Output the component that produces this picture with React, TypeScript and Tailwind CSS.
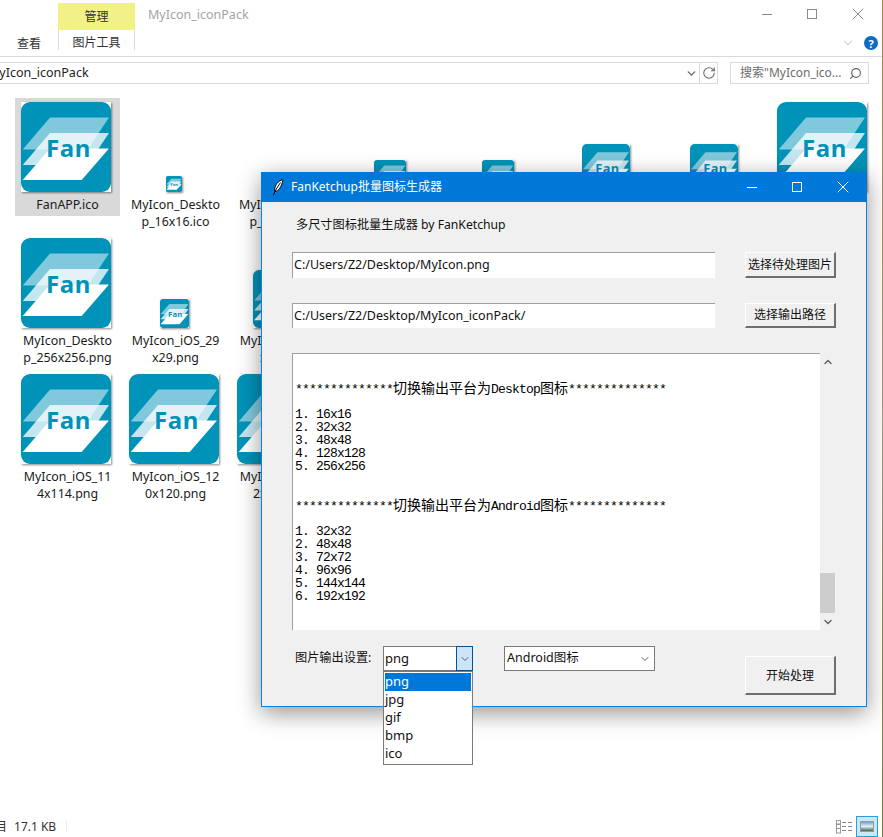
import React from "react";
import { RotateCw, Search, ChevronDown, ChevronUp, X } from "lucide-react";

const ui = "font-['Noto_Sans','Noto_Sans_CJK_SC',sans-serif]";

function Logo({ size }: { size: number }) {
  return (
    <svg width={size} height={size} viewBox="0 0 90 90" className="block shrink-0 bg-white shadow-[1px_1px_2px_rgba(0,0,0,0.45)]">
      <rect x="0" y="0" width="90" height="90" rx="9" fill="#0093b9" />
      <polygon points="29,15.5 88,15.5 66.7,47.5 1.7,47.5" fill="#80c8dc" />
      <polygon points="29,31 88,31 66.7,63 1.7,63" fill="#ffffff" fillOpacity="0.77" />
      <polygon points="29,46.5 88,46.5 60.7,78 1.7,78" fill="#ffffff" />
      <text x="47.5" y="55" textAnchor="middle" fontFamily="'Noto Sans', sans-serif" fontWeight="700" fontSize="24" letterSpacing="0.6" fill="#0093b9">
        Fan
      </text>
    </svg>
  );
}

function Tile({ size, lines, selected }: { size: number; lines?: string[]; selected?: boolean }) {
  return (
    <div className={`flex h-[118px] w-[105px] flex-col items-center ${selected ? "bg-[#d9d9d9]" : ""}`}>
      <div className="flex h-[94px] w-full shrink-0 items-end justify-center pr-[3px]">
        <Logo size={size} />
      </div>
      {lines && (
        <div className="mt-[4px] w-full shrink-0 text-center text-[12.4px] leading-[17px] whitespace-nowrap text-[#1a1a1a]">
          {lines.map((l) => (
            <div key={l}>{l}</div>
          ))}
        </div>
      )}
    </div>
  );
}

function C({ children }: { children: React.ReactNode }) {
  return <span className="font-['Noto_Sans_CJK_SC',sans-serif] text-[14px] leading-none font-normal tracking-normal">{children}</span>;
}

function Line({ children }: { children?: React.ReactNode }) {
  return <div className="h-[13px] whitespace-pre text-[13px] leading-[13px] tracking-[-0.8px]">{children}</div>;
}

function Row({ children }: { children: React.ReactNode }) {
  return <div className="h-[13px] whitespace-pre text-[13px] leading-[18px] tracking-[-0.8px]">{children}</div>;
}

const stars = "**************";

function TkButton({ label, className }: { label: string; className: string }) {
  return (
    <button className={`flex items-center justify-center border-t border-l border-b-2 border-r-2 border-t-white border-l-white border-b-[#6e6e6e] border-r-[#6e6e6e] bg-[#f0f0f0] text-[12px] text-[#111] ${className}`}>
      {label}
    </button>
  );
}

function Feather() {
  return (
    <svg width="12" height="17" viewBox="0 0 12 17" className="shrink-0">
      <path d="M10.5 0.8C6.5 1.8 3 5.5 2.6 10.5L3 12.5C6.5 12 9.5 8 10.8 1.5Z" fill="#fff" stroke="#000" strokeWidth="1" />
      <path d="M8.5 3.5 3 12 1.6 16.2" fill="none" stroke="#000" strokeWidth="1" />
    </svg>
  );
}

export default function App() {
  return (
    <div className={`relative flex h-[837px] w-[883px] flex-col overflow-hidden bg-white ${ui}`}>
      {/* Explorer ribbon */}
      <header className="h-[57px] shrink-0 border-b border-[#dadada] pr-px">
        <div className="flex h-[30px] items-start pt-[3px]">
          <div className="ml-[58px] flex h-[27px] w-[77px] items-center justify-center bg-[#f1f187] text-[12px] text-[#333]">管理</div>
          <div className="ml-[13px] mt-[3px] text-[12.5px] leading-[18px] text-[#a3a3a3]">MyIcon_iconPack</div>
          <div className="ml-auto mr-[14px] mt-[1px] flex h-[20px] items-center text-[#8a8a8a]">
            <div className="h-px w-[10px] bg-[#8a8a8a]" />
            <div className="ml-[35px] h-[10px] w-[10px] border border-[#8a8a8a]" />
            <X size={20} strokeWidth={1.2} className="ml-[31px]" />
          </div>
        </div>
        <div className="flex h-[26px] items-start">
          <div className="flex h-[26px] w-[58px] items-center justify-center pt-[1px] text-[12px] text-[#333]">查看</div>
          <div className="flex h-[20px] w-[77px] items-center justify-center border-x border-[#dadada] pt-[5px] text-[12px] text-[#333]">图片工具</div>
          <div className="ml-auto flex h-[26px] items-center gap-[9px] pr-[4px]">
            <ChevronDown size={14} strokeWidth={1.2} className="text-[#9a9a9a]" />
            <div className="flex h-[14px] w-[14px] items-center justify-center rounded-full bg-[#0a6cc4] text-[11px] leading-none font-bold text-white">?</div>
          </div>
        </div>
      </header>

      {/* Address and search */}
      <div className="mt-[5px] flex h-[22px] shrink-0 items-stretch">
        <div className="flex w-[718px] items-center border-y border-r border-[#dadada]">
          <div className="-ml-[12px] flex-1 text-[12.5px] leading-[20px] text-[#222]">MyIcon_iconPack</div>
          <div className="flex h-full w-[16px] items-center justify-center border-r border-[#dadada]">
            <ChevronDown size={13} strokeWidth={2.6} className="text-[#666]" />
          </div>
          <div className="flex w-[17px] items-center justify-center">
            <RotateCw size={14} strokeWidth={1.8} className="text-[#666]" />
          </div>
        </div>
        <div className="ml-[12px] flex w-[139px] items-center border border-[#dadada] pl-[9px] text-[12px] text-[#6d6d6d]">
          <span>搜索"MyIcon_ico...</span>
          <Search size={13} strokeWidth={2.2} className="ml-auto mr-[6px] -scale-x-100 text-[#666]" />
        </div>
      </div>

      {/* Icon grid */}
      <main className="grid grid-cols-[repeat(8,105px)] auto-rows-[136px] gap-x-[3px] pt-[14px] pl-[15px]">
        <Tile size={90} lines={["FanAPP.ico"]} selected />
        <Tile size={16} lines={["MyIcon_Deskto", "p_16x16.ico"]} />
        <Tile size={16} lines={["MyIcon_Deskto", "p_32x32.ico"]} />
        <Tile size={32} />
        <Tile size={32} />
        <Tile size={48} />
        <Tile size={48} />
        <Tile size={90} />
        <Tile size={90} lines={["MyIcon_Deskto", "p_256x256.png"]} />
        <Tile size={29} lines={["MyIcon_iOS_29", "x29.png"]} />
        <Tile size={58} lines={["MyIcon_iOS_58", "x58.png"]} />
        <div className="col-span-5" />
        <Tile size={90} lines={["MyIcon_iOS_11", "4x114.png"]} />
        <Tile size={90} lines={["MyIcon_iOS_12", "0x120.png"]} />
        <Tile size={90} lines={["MyIcon_iOS_15", "2x152.png"]} />
      </main>

      {/* Status bar */}
      <footer className="mt-auto flex h-[21px] items-center pr-[5px] text-[12px] text-[#333]">
        <span className="-ml-[5px]">目</span>
        <span className="ml-[7px]">17.1 KB</span>
        <span className="ml-[10px] h-[13px] w-px bg-[#ececec]" />
        <svg width="17" height="14" viewBox="0 0 17 14" className="ml-auto">
          <rect x="0.5" y="0.5" width="4" height="3.5" fill="none" stroke="#9a9a9a" />
          <rect x="0.5" y="4.5" width="4" height="4" fill="none" stroke="#9a9a9a" />
          <rect x="0.5" y="8.5" width="4" height="4.5" fill="none" stroke="#9a9a9a" />
          <path d="M6 2.5h4M12 2.5h4M6 6.5h4M12 6.5h4M6 10.5h4M12 10.5h4" stroke="#8a8a8a" />
        </svg>
        <div className="ml-[3px] flex h-[21px] w-[22px] items-center justify-center border border-[#26a0da] bg-[#cbe8f6]">
          <div className="h-[11px] w-[14px] border border-[#9a9a9a] bg-gradient-to-b from-[#6aa8e4] via-[#e4ecec] to-[#3f6a5a]" />
        </div>
      </footer>

      {/* Desktop sliver at the right edge */}
      <div className="absolute top-0 right-0 bottom-0 w-px bg-gradient-to-b from-[#a8823c] via-[#a59a7c] to-[#6f7a35]" />

      {/* Generator window */}
      <section className="absolute top-[172px] left-[261px] flex h-[535px] w-[606px] flex-col border border-[#0a84e0] bg-[#f0f0f0] shadow-[0_6px_22px_rgba(0,0,0,0.42)]">
        <div className="-mx-px -mt-px flex h-[30px] shrink-0 items-center bg-[#0078d7] pl-[11px] text-white">
          <Feather />
          <span className="ml-[7px] text-[12px]">FanKetchup批量图标生成器</span>
          <div className="ml-auto flex items-center pr-[14px]">
            <div className="h-px w-[10px] bg-white" />
            <div className="ml-[35px] h-[10px] w-[10px] border border-white" />
            <X size={20} strokeWidth={1.2} className="ml-[31px]" />
          </div>
        </div>
        <div className="flex flex-col pl-[30px]">
          <div className="mt-[15px] h-[16px] pl-[4px] text-[12.2px] leading-[16px] text-[#111]">多尺寸图标批量生成器 by FanKetchup</div>

          <div className="mt-[19px] flex h-[26px] items-stretch">
            <div className="flex w-[423px] items-center border-t border-l border-[#a0a0a0] bg-white pl-[1px] text-[12.5px] text-[#111]">C:/Users/Z2/Desktop/MyIcon.png</div>
            <TkButton label="选择待处理图片" className="ml-[30px] w-[91px]" />
          </div>
          <div className="mt-[25px] flex h-[25px] items-stretch">
            <div className="flex w-[423px] items-center border-t border-l border-[#a0a0a0] bg-white pl-[1px] text-[12.5px] text-[#111]">C:/Users/Z2/Desktop/MyIcon_iconPack/</div>
            <TkButton label="选择输出路径" className="ml-[30px] w-[91px]" />
          </div>

          <div className="mt-[25px] flex h-[277px]">
            <div className="w-[528px] border-t border-l border-[#a0a0a0] bg-white pl-[2px] font-['Liberation_Mono',monospace] text-black">
              <Line />
              <Line />
              <Line>{stars}<C>切换输出平台为</C>Desktop<C>图标</C>{stars}</Line>
              <Line />
              <Row>1. 16x16</Row>
              <Row>2. 32x32</Row>
              <Row>3. 48x48</Row>
              <Row>4. 128x128</Row>
              <Row>5. 256x256</Row>
              <Line />
              <Line />
              <Line>{stars}<C>切换输出平台为</C>Android<C>图标</C>{stars}</Line>
              <Line />
              <Row>1. 32x32</Row>
              <Row>2. 48x48</Row>
              <Row>3. 72x72</Row>
              <Row>4. 96x96</Row>
              <Row>5. 144x144</Row>
              <Row>6. 192x192</Row>
            </div>
            <div className="flex w-[15px] flex-col text-[#666]">
              <div className="flex h-[17px] items-center justify-center">
                <ChevronUp size={12} strokeWidth={3} />
              </div>
              <div className="flex-1" />
              <div className="h-[40px] bg-[#cdcdcd]" />
              <div className="flex h-[17px] items-center justify-center">
                <ChevronDown size={12} strokeWidth={3} />
              </div>
            </div>
          </div>

          <div className="mt-[16px] flex items-start">
            <div className="flex h-[25px] w-[91px] items-center pl-[3px] text-[12.2px] text-[#111]">图片输出设置:</div>
            <div className="relative flex h-[25px] w-[90px] border border-[#7a7a7a] bg-white">
              <div className="flex flex-1 items-center pl-[1px] text-[13px] text-[#111]">png</div>
              <div className="-my-px -mr-px flex w-[17px] items-center justify-center border border-[#005499] bg-[#cce4f7]">
                <ChevronDown size={12} strokeWidth={1.7} className="text-[#444]" />
              </div>
              <div className="absolute top-[24px] -left-px z-10 flex h-[94px] w-[90px] flex-col border border-[#7a7a7a] bg-white p-px text-[13px] text-[#111]">
                <div className="flex h-[18px] items-center bg-[#0078d7] text-white">png</div>
                <div className="flex h-[18px] items-center">jpg</div>
                <div className="flex h-[18px] items-center">gif</div>
                <div className="flex h-[18px] items-center">bmp</div>
                <div className="flex h-[18px] items-center">ico</div>
              </div>
            </div>
            <div className="ml-[31px] flex h-[25px] w-[151px] items-center border border-[#7a7a7a] bg-white pl-[2px] text-[12.5px] text-[#111]">
              <span>Android图标</span>
              <ChevronDown size={12} strokeWidth={1.7} className="ml-auto mr-[3px] text-[#444]" />
            </div>
            <TkButton label="开始处理" className="ml-[90px] mt-[10px] h-[39px] w-[91px] pt-[1px]" />
          </div>
        </div>
      </section>
    </div>
  );
}
